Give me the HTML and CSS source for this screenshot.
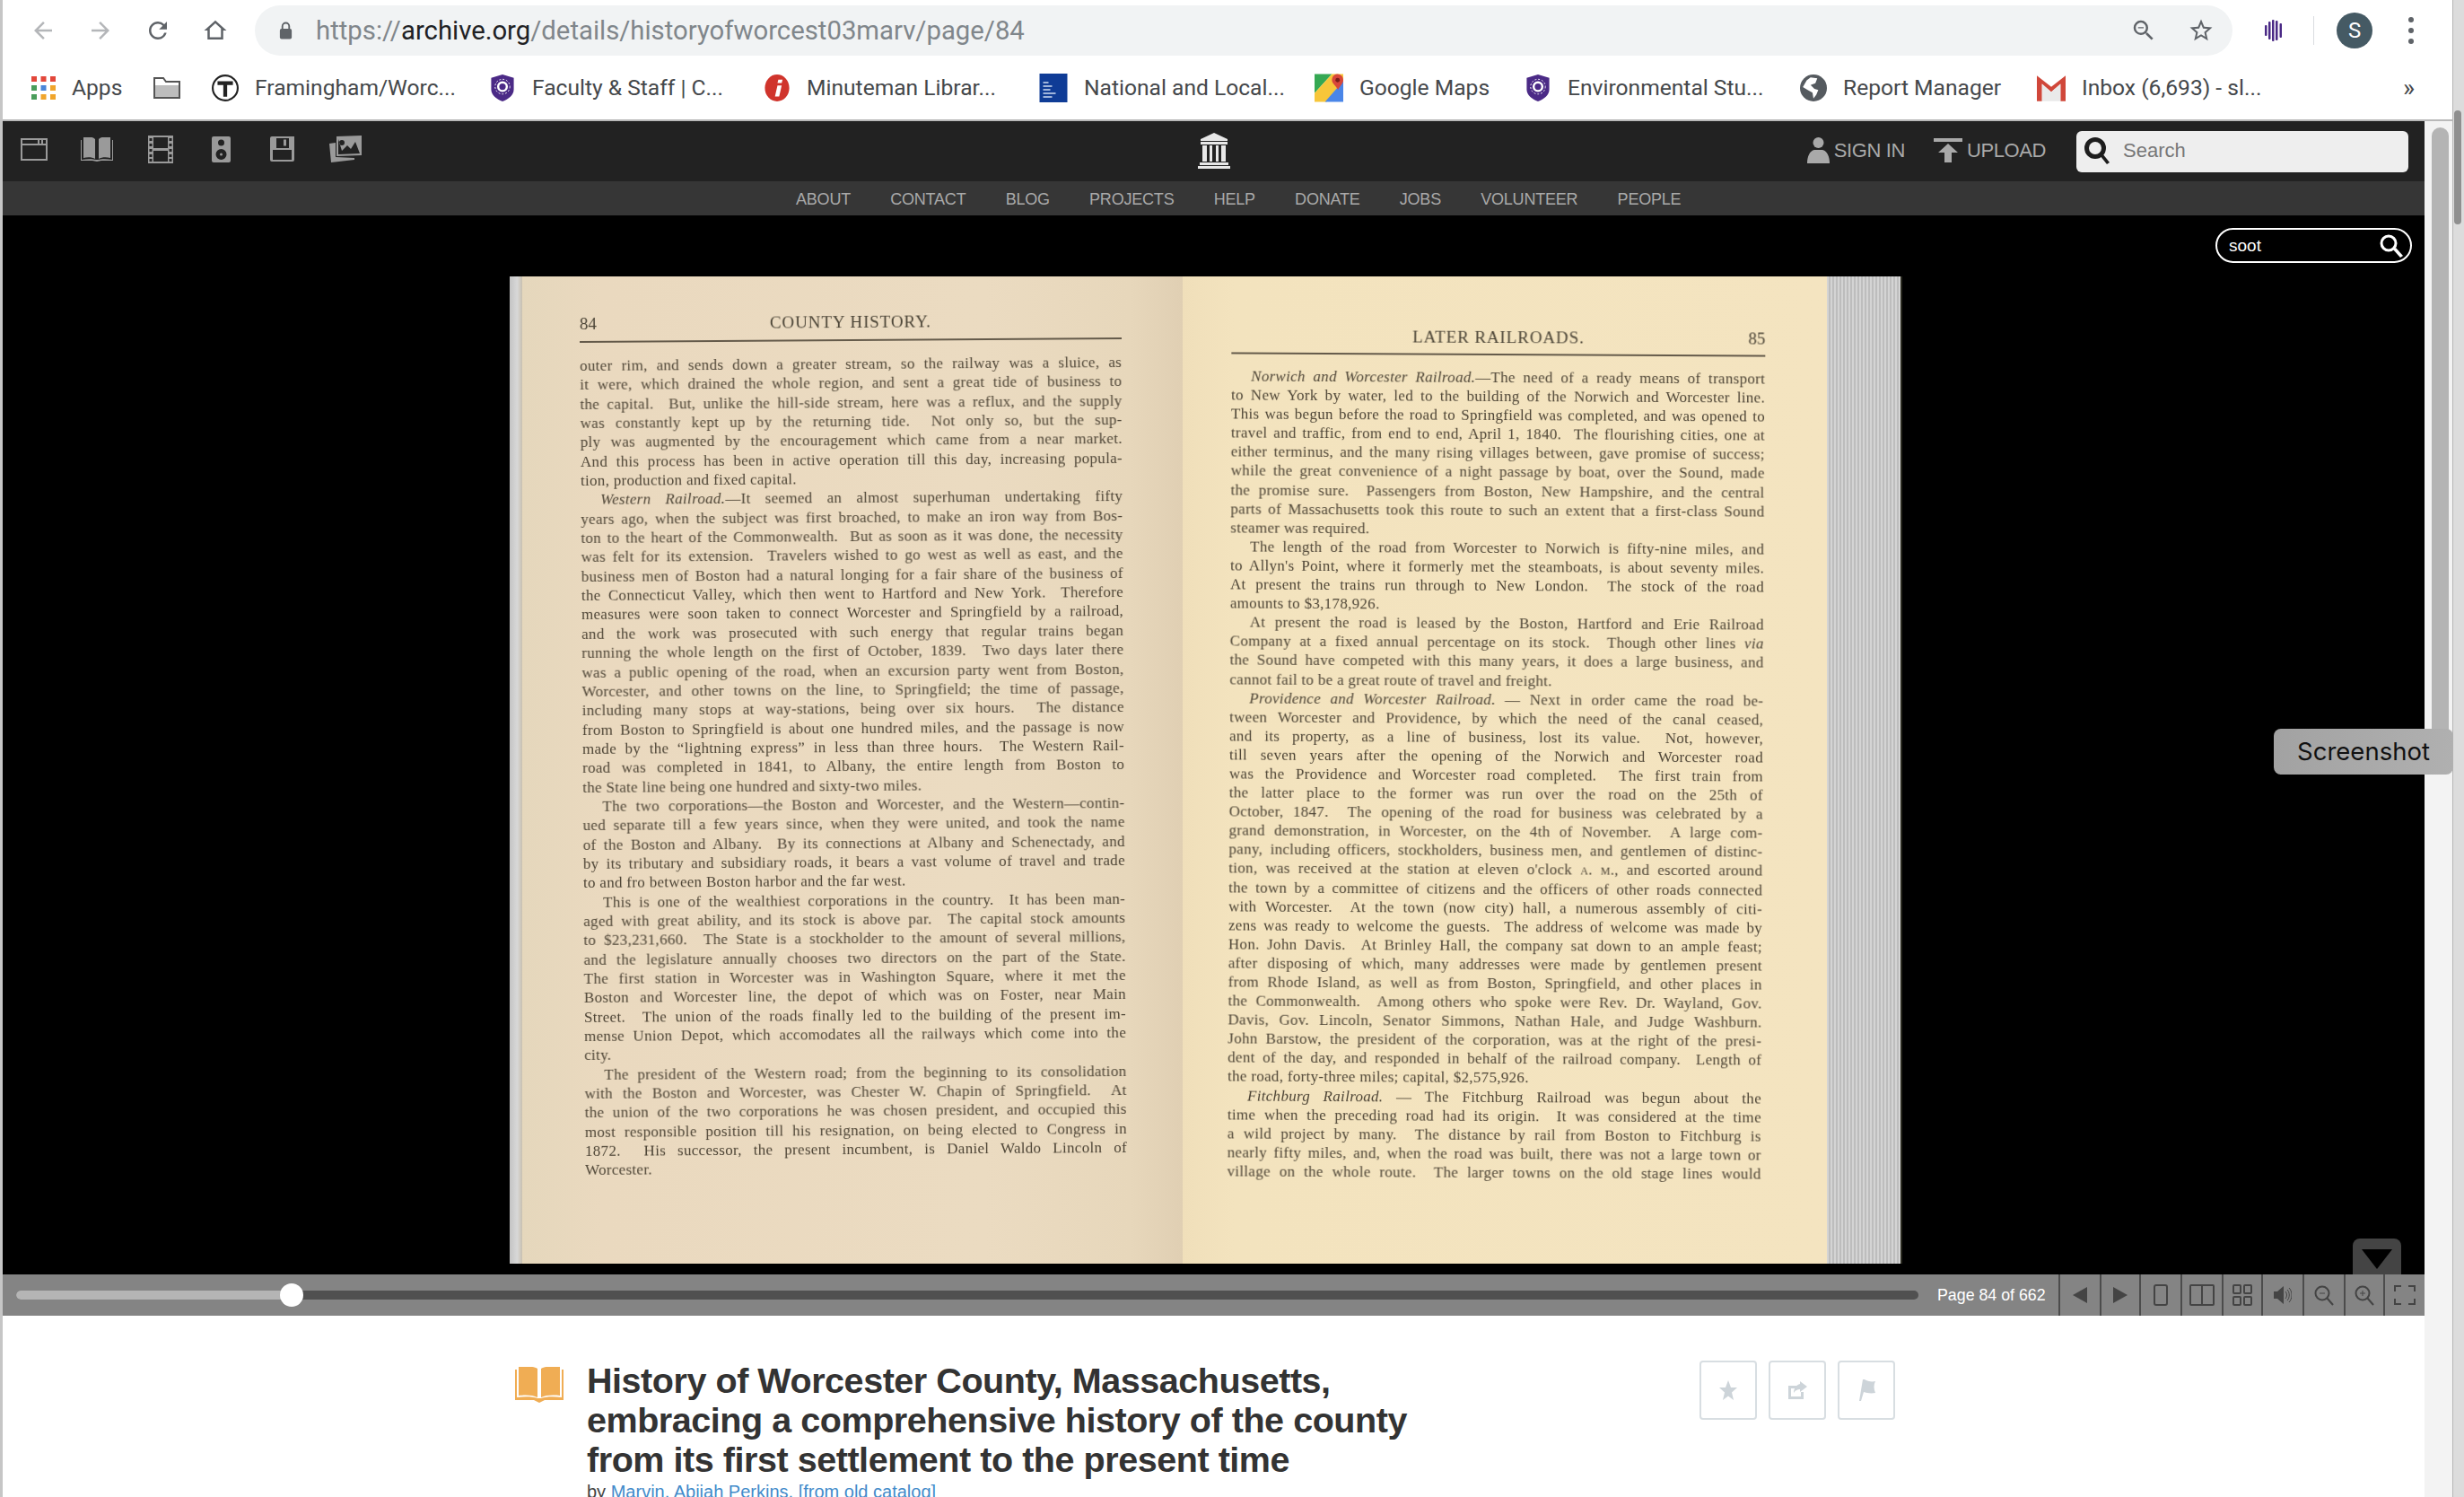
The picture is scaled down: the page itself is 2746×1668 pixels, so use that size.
FILE: index.html
```html
<!DOCTYPE html>
<html lang="en">
<head>
<meta charset="utf-8">
<title>History of Worcester County, Massachusetts</title>
<link rel="stylesheet" href="styles.css">
</head>
<body>
<div class="window">
  <div class="main">
    <header class="chrome">
      <div class="toolbar">
        <svg class="tb-icon faded" viewBox="0 0 24 24"><path d="M20 11H7.83l5.59-5.59L12 4l-8 8 8 8 1.41-1.41L7.83 13H20v-2z"/></svg>
        <svg class="tb-icon faded" viewBox="0 0 24 24"><path d="M12 4l-1.41 1.41L16.17 11H4v2h12.17l-5.58 5.59L12 20l8-8z"/></svg>
        <svg class="tb-icon" viewBox="0 0 24 24"><path d="M17.65 6.35A7.958 7.958 0 0 0 12 4c-4.42 0-7.99 3.58-7.99 8s3.57 8 7.99 8c3.73 0 6.84-2.55 7.73-6h-2.08A5.99 5.99 0 0 1 12 18c-3.31 0-6-2.69-6-6s2.69-6 6-6c1.66 0 3.14.69 4.22 1.78L13 11h7V4l-2.35 2.35z"/></svg>
        <svg class="tb-icon" viewBox="0 0 24 24"><path d="M12 3L2 12h3v8h14v-8h3L12 3zm5 15H7v-7.81l5-4.5 5 4.5V18z"/></svg>
        <div class="omnibox">
          <svg class="lock" viewBox="0 0 18 22"><path d="M4 9V6a5 5 0 0 1 10 0v3h-2V6a3 3 0 0 0-6 0v3z"/><rect x="2" y="9" width="14" height="12" rx="2"/></svg>
          <span class="url">https://<b>archive.org</b>/details/historyofworcest03marv/page/84</span>
          <svg class="tb-icon omni-action" viewBox="0 0 24 24"><path d="M15.5 14h-.79l-.28-.27A6.471 6.471 0 0 0 16 9.5 6.5 6.5 0 1 0 9.5 16c1.61 0 3.09-.59 4.23-1.57l.27.28v.79l5 4.99L20.49 19l-4.99-5zm-6 0C7.01 14 5 11.99 5 9.5S7.01 5 9.5 5 14 7.01 14 9.5 11.99 14 9.5 14zM7 9h5v1H7z"/></svg>
          <svg class="tb-icon omni-action" viewBox="0 0 24 24"><path d="M22 9.24l-7.19-.62L12 2 9.19 8.63 2 9.24l5.46 4.73L5.82 21 12 17.27 18.18 21l-1.63-7.03L22 9.24zM12 15.4l-3.76 2.27 1-4.28-3.32-2.88 4.38-.38L12 6.1l1.71 4.04 4.38.38-3.32 2.88 1 4.28L12 15.4z"/></svg>
        </div>
        <svg class="ext" viewBox="0 0 20 24"><g fill="#4b2a86"><rect x="0" y="6" width="2.5" height="12" rx="1"/><rect x="4" y="2" width="2.5" height="20" rx="1"/><rect x="8" y="0" width="2.5" height="24" rx="1"/><rect x="12" y="1" width="2.5" height="22" rx="1"/><rect x="16.500" y="4" width="2.500" height="16" rx="1"/></g></svg>
        <span class="tb-sep"></span>
        <span class="avatar">S</span>
        <span class="dots"><i></i><i></i><i></i></span>
      </div>
      <nav class="bookmarks">
        <a class="bm"><svg class="bm-icon apps" viewBox="0 0 27 26"><g fill="#e2473a"><rect width="6" height="6"/><rect x="10.500" width="6" height="6"/><rect x="21" width="6" height="6"/></g><rect y="10" width="6" height="6" fill="#4a9d5b"/><rect x="10.500" y="10" width="6" height="6" fill="#4a86d8"/><rect x="21" y="10" width="6" height="6" fill="#f0a52c"/><rect y="20" width="6" height="6" fill="#4a9d5b"/><rect x="10.500" y="20" width="6" height="6" fill="#f0a52c"/><rect x="21" y="20" width="6" height="6" fill="#f0a52c"/></svg>Apps</a>
        <a class="bm"><svg class="bm-icon folder" viewBox="0 0 30 24"><path d="M1 1h10l3 4h15v18H1z" fill="#fff" stroke="#555" stroke-width="2"/><rect x="2" y="9" width="26" height="13" fill="#bdbdbd"/></svg></a>
        <a class="bm"><svg class="bm-icon round" viewBox="0 0 28 28"><circle cx="14" cy="14" r="13" fill="#fff" stroke="#222" stroke-width="2"/><path d="M6 7h16v4h-6v12h-4V11H6z" fill="#222"/></svg><span class="bm-text">Framingham/Worc...</span></a>
        <a class="bm"><svg class="bm-icon shield" viewBox="0 0 28 31"><path d="M14 0l13 4v13c0 7-6 11-13 14C7 28 1 24 1 17V4z" fill="#4b2a86"/><circle cx="14" cy="14" r="5" fill="none" stroke="#fff" stroke-width="2.500"/><circle cx="14" cy="14" r="8.500" fill="none" stroke="#fff" stroke-width="1" stroke-dasharray="2 2"/></svg><span class="bm-text">Faculty &amp; Staff | C...</span></a>
        <a class="bm"><svg class="bm-icon round" viewBox="0 0 29 32"><ellipse cx="14.500" cy="16" rx="14.500" ry="16" fill="#d0342c"/><path d="M15 13h5l-3 13h-5zM16 6h5l-1 4h-5z" fill="#fff"/></svg><span class="bm-text">Minuteman Librar...</span></a>
        <a class="bm"><svg class="bm-icon square" viewBox="0 0 31 32"><rect width="31" height="32" fill="#0f3c96"/><path d="M4 10h6M4 14h10M4 18h8M4 22h14M4 26h10" stroke="#cfdcf2" stroke-width="1.500"/></svg><span class="bm-text">National and Local...</span></a>
        <a class="bm"><svg class="bm-icon square" viewBox="0 0 33 32"><path d="M0 0h20L0 22z" fill="#35a853"/><path d="M20 0h13v8L14 32H0V22z" fill="#f7c63a"/><path d="M12 32L33 8v24z" fill="#4a86e8"/><path d="M26 0c5 0 7 4 7 7 0 4-4 7-6 11-2-4-7-7-7-11 0-3 2-7 6-7z" fill="#d8473a"/><circle cx="26.500" cy="7" r="2.500" fill="#7a1f19"/></svg><span class="bm-text">Google Maps</span></a>
        <a class="bm"><svg class="bm-icon shield" viewBox="0 0 28 31"><path d="M14 0l13 4v13c0 7-6 11-13 14C7 28 1 24 1 17V4z" fill="#4b2a86"/><circle cx="14" cy="14" r="5" fill="none" stroke="#fff" stroke-width="2.500"/><circle cx="14" cy="14" r="8.500" fill="none" stroke="#fff" stroke-width="1" stroke-dasharray="2 2"/></svg><span class="bm-text">Environmental Stu...</span></a>
        <a class="bm"><svg class="bm-icon round" viewBox="0 0 28 28"><circle cx="14" cy="14" r="14" fill="#555a5f"/><path d="M11 3l7 1-2 5-5 2 4 4 4 1-2 5-3 4-1-6-5-3-5-3 4-7z" fill="#fff"/></svg><span class="bm-text">Report Manager</span></a>
        <a class="bm"><svg class="bm-icon square" viewBox="0 0 28 26"><path d="M0 1v25h5V9l9 8 9-8v17h5V1l-14 11z" fill="#d0473a"/><path d="M5 9l9 8 9-8v17H5z" fill="#eaeaea"/></svg><span class="bm-text">Inbox (6,693) - sl...</span></a>
        <span class="bm-more">»</span>
      </nav>
    </header>
    <div class="content">
      <div class="page">
        <div class="sitebar">
          <div class="media">
            <svg class="m-web" viewBox="0 0 30 25"><path d="M0 0h30v25H0zM2 8v15h26V8zM2 2v4h17V2zM21 2v4h2V2zM25 2v4h3V2z" fill-rule="evenodd"/></svg>
            <svg class="m-book" viewBox="0 0 36 27"><path d="M3 0c4-1 10-1 13 2v22c-3-2-9-2-13-1zM33 0c-4-1-10-1-13 2v22c3-2 9-2 13-1z"/><path d="M0 3h1v22c6-1 12-1 16 0h2c4-1 10-1 16 0V3h1v23H23l-5 1-5-1H0z"/></svg>
            <svg class="m-film" viewBox="0 0 28 31"><path fill-rule="evenodd" d="M0 0h28v31H0zM6 2v12h16V2zM6 17v12h16V17zM1.500 3v3h3V3zM1.500 9v3h3V9zM1.500 15v3h3v-3zM1.500 21v3h3v-3zM1.500 26v3h3v-3zM23.500 3v3h3V3zM23.500 9v3h3V9zM23.500 15v3h3v-3zM23.500 21v3h3v-3zM23.500 26v3h3v-3z"/></svg>
            <svg class="m-audio" viewBox="0 0 21 29"><path fill-rule="evenodd" d="M2 0h17a2 2 0 0 1 2 2v25a2 2 0 0 1-2 2H2a2 2 0 0 1-2-2V2a2 2 0 0 1 2-2zM10.500 3.500a3.500 3.500 0 1 0 0 7 3.500 3.500 0 0 0 0-7zM10.500 14a6 6 0 1 0 0 12 6 6 0 0 0 0-12zM10.500 18.500a1.500 1.500 0 1 1 0 3 1.500 1.500 0 0 1 0-3z"/></svg>
            <svg class="m-soft" viewBox="0 0 27 28"><path fill-rule="evenodd" d="M2 0h25v26a2 2 0 0 1-2 2H2a2 2 0 0 1-2-2V2a2 2 0 0 1 2-2zM7 2v11h14V2zM3 15v11h21V15zM15 3.500h3v7h-3z"/></svg>
            <svg class="m-image" viewBox="0 0 36 30"><path d="M0 9l7-1v16l21 1v2L2 30z"/><path fill-rule="evenodd" d="M8 1l28-1v22l-28 1zM10 4v17l24-1-5-13-5 8-4-4-6 6zM14 5a3 3 0 1 0 0 6 3 3 0 0 0 0-6z"/></svg>
          </div>
          <svg class="temple" viewBox="0 0 36 40"><path d="M18 0l15 7v2H3V7zM3 10h30v3H3zM5 14h5v18H5zM13 14h3v18h-3zM20 14h3v18h-3zM26 14h5v18h-5zM2 33h32v3H2zM0 37h36v3H0z"/></svg>
          <div class="account">
            <span class="acct-link"><svg class="ic-person" viewBox="0 0 25 29"><circle cx="12.500" cy="6" r="6"/><path d="M5 29H0c0-8 3-14 8-15h9c5 1 8 7 8 15z"/></svg>SIGN IN</span>
            <span class="acct-link upload"><svg class="ic-upload" viewBox="0 0 32 27"><path d="M0 0h32v4H0zM16 6l11 10h-7v11h-8V16H5z"/></svg>UPLOAD</span>
            <div class="site-search">
              <svg class="ic-find" viewBox="0 0 28 30"><circle cx="12" cy="12" r="9.500" fill="none" stroke="#1d1d1d" stroke-width="5"/><path d="M17 20l3-2 8 10-3 2z" fill="#1d1d1d"/></svg>
              <span>Search</span>
            </div>
          </div>
        </div>
        <nav class="sitenav"><a>ABOUT</a><a>CONTACT</a><a>BLOG</a><a>PROJECTS</a><a>HELP</a><a>DONATE</a><a>JOBS</a><a>VOLUNTEER</a><a>PEOPLE</a></nav>
        <section class="viewer">
          <div class="inside-search"><span>soot</span><svg class="ic-inside" viewBox="0 0 26 26"><circle cx="10" cy="10" r="8" fill="none" stroke="#fff" stroke-width="3"/><path d="M15 17l3-2 8 9-3 2z" fill="#fff"/></svg></div>
          <div class="spread">
            <div class="edge edge-l"></div>
            <article class="leaf leaf-l">
              <div class="col col-l">
                <div class="runhead"><span>84</span><span class="runtitle">COUNTY HISTORY.</span><span></span></div>
                <p class="para"><span class="ln">outer rim, and sends down a greater stream, so the railway was a sluice, as</span><span class="ln">it were, which drained the whole region, and sent a great tide of business to</span><span class="ln">the capital. &nbsp;But, unlike the hill-side stream, here was a reflux, and the supply</span><span class="ln">was constantly kept up by the returning tide. &nbsp;Not only so, but the sup-</span><span class="ln">ply was augmented by the encouragement which came from a near market.</span><span class="ln">And this process has been in active operation till this day, increasing popula-</span><span class="ln end">tion, production and fixed capital.</span></p>
                <p class="para"><span class="ln first"><em>Western Railroad.</em>—It seemed an almost superhuman undertaking fifty</span><span class="ln">years ago, when the subject was first broached, to make an iron way from Bos-</span><span class="ln">ton to the heart of the Commonwealth. &nbsp;But as soon as it was done, the necessity</span><span class="ln">was felt for its extension. &nbsp;Travelers wished to go west as well as east, and the</span><span class="ln">business men of Boston had a natural longing for a fair share of the business of</span><span class="ln">the Connecticut Valley, which then went to Hartford and New York. &nbsp;Therefore</span><span class="ln">measures were soon taken to connect Worcester and Springfield by a railroad,</span><span class="ln">and the work was prosecuted with such energy that regular trains began</span><span class="ln">running the whole length on the first of October, 1839. &nbsp;Two days later there</span><span class="ln">was a public opening of the road, when an excursion party went from Boston,</span><span class="ln">Worcester, and other towns on the line, to Springfield; the time of passage,</span><span class="ln">including many stops at way-stations, being over six hours. &nbsp;The distance</span><span class="ln">from Boston to Springfield is about one hundred miles, and the passage is now</span><span class="ln">made by the “lightning express” in less than three hours. &nbsp;The Western Rail-</span><span class="ln">road was completed in 1841, to Albany, the entire length from Boston to</span><span class="ln end">the State line being one hundred and sixty-two miles.</span></p>
                <p class="para"><span class="ln first">The two corporations—the Boston and Worcester, and the Western—contin-</span><span class="ln">ued separate till a few years since, when they were united, and took the name</span><span class="ln">of the Boston and Albany. &nbsp;By its connections at Albany and Schenectady, and</span><span class="ln">by its tributary and subsidiary roads, it bears a vast volume of travel and trade</span><span class="ln end">to and fro between Boston harbor and the far west.</span></p>
                <p class="para"><span class="ln first">This is one of the wealthiest corporations in the country. &nbsp;It has been man-</span><span class="ln">aged with great ability, and its stock is above par. &nbsp;The capital stock amounts</span><span class="ln">to $23,231,660. &nbsp;The State is a stockholder to the amount of several millions,</span><span class="ln">and the legislature annually chooses two directors on the part of the State.</span><span class="ln">The first station in Worcester was in Washington Square, where it met the</span><span class="ln">Boston and Worcester line, the depot of which was on Foster, near Main</span><span class="ln">Street. &nbsp;The union of the roads finally led to the building of the present im-</span><span class="ln">mense Union Depot, which accomodates all the railways which come into the</span><span class="ln end">city.</span></p>
                <p class="para"><span class="ln first">The president of the Western road; from the beginning to its consolidation</span><span class="ln">with the Boston and Worcester, was Chester W. Chapin of Springfield. &nbsp;At</span><span class="ln">the union of the two corporations he was chosen president, and occupied this</span><span class="ln">most responsible position till his resignation, on being elected to Congress in</span><span class="ln">1872. &nbsp;His successor, the present incumbent, is Daniel Waldo Lincoln of</span><span class="ln end">Worcester.</span></p>
              </div>
            </article>
            <article class="leaf leaf-r">
              <div class="col col-r">
                <div class="runhead"><span></span><span class="runtitle">LATER RAILROADS.</span><span class="folio">85</span></div>
                <p class="para"><span class="ln first"><em>Norwich and Worcester Railroad.</em>—The need of a ready means of transport</span><span class="ln">to New York by water, led to the building of the Norwich and Worcester line.</span><span class="ln">This was begun before the road to Springfield was completed, and was opened to</span><span class="ln">travel and traffic, from end to end, April 1, 1840. &nbsp;The flourishing cities, one at</span><span class="ln">either terminus, and the many rising villages between, gave promise of success;</span><span class="ln">while the great convenience of a night passage by boat, over the Sound, made</span><span class="ln">the promise sure. &nbsp;Passengers from Boston, New Hampshire, and the central</span><span class="ln">parts of Massachusetts took this route to such an extent that a first-class Sound</span><span class="ln end">steamer was required.</span></p>
                <p class="para"><span class="ln first">The length of the road from Worcester to Norwich is fifty-nine miles, and</span><span class="ln">to Allyn's Point, where it formerly met the steamboats, is about seventy miles.</span><span class="ln">At present the trains run through to New London. &nbsp;The stock of the road</span><span class="ln end">amounts to $3,178,926.</span></p>
                <p class="para"><span class="ln first">At present the road is leased by the Boston, Hartford and Erie Railroad</span><span class="ln">Company at a fixed annual percentage on its stock. &nbsp;Though other lines <em>via</em></span><span class="ln">the Sound have competed with this many years, it does a large business, and</span><span class="ln end">cannot fail to be a great route of travel and freight.</span></p>
                <p class="para"><span class="ln first"><em>Providence and Worcester Railroad.</em> — Next in order came the road be-</span><span class="ln">tween Worcester and Providence, by which the need of the canal ceased,</span><span class="ln">and its property, as a line of business, lost its value. &nbsp;Not, however,</span><span class="ln">till seven years after the opening of the Norwich and Worcester road</span><span class="ln">was the Providence and Worcester road completed. &nbsp;The first train from</span><span class="ln">the latter place to the former was run over the road on the 25th of</span><span class="ln">October, 1847. &nbsp;The opening of the road for business was celebrated by a</span><span class="ln">grand demonstration, in Worcester, on the 4th of November. &nbsp;A large com-</span><span class="ln">pany, including officers, stockholders, business men, and gentlemen of distinc-</span><span class="ln">tion, was received at the station at eleven o'clock <span class="sc">a. m.</span>, and escorted around</span><span class="ln">the town by a committee of citizens and the officers of other roads connected</span><span class="ln">with Worcester. &nbsp;At the town (now city) hall, a numerous assembly of citi-</span><span class="ln">zens was ready to welcome the guests. &nbsp;The address of welcome was made by</span><span class="ln">Hon. John Davis. &nbsp;At Brinley Hall, the company sat down to an ample feast;</span><span class="ln">after disposing of which, many addresses were made by gentlemen present</span><span class="ln">from Rhode Island, as well as from Boston, Springfield, and other places in</span><span class="ln">the Commonwealth. &nbsp;Among others who spoke were Rev. Dr. Wayland, Gov.</span><span class="ln">Davis, Gov. Lincoln, Senator Simmons, Nathan Hale, and Judge Washburn.</span><span class="ln">John Barstow, the president of the corporation, was at the right of the presi-</span><span class="ln">dent of the day, and responded in behalf of the railroad company. &nbsp;Length of</span><span class="ln end">the road, forty-three miles; capital, $2,575,926.</span></p>
                <p class="para"><span class="ln first"><em>Fitchburg Railroad.</em> — The Fitchburg Railroad was begun about the</span><span class="ln">time when the preceding road had its origin. &nbsp;It was considered at the time</span><span class="ln">a wild project by many. &nbsp;The distance by rail from Boston to Fitchburg is</span><span class="ln">nearly fifty miles, and, when the road was built, there was not a large town or</span><span class="ln">village on the whole route. &nbsp;The larger towns on the old stage lines would</span></p>
              </div>
            </article>
            <div class="edge edge-r"></div>
          </div>
          <div class="hide-tab"><svg class="tab-tri" viewBox="0 0 34 22"><path d="M0 0h34L17 22z"/></svg></div>
        </section>
        <div class="controls">
          <div class="scrub"><span class="scrub-done"></span><span class="scrub-knob"></span></div>
          <span class="pagenum">Page 84 of 662</span>
          <div class="ctl-buttons">
            <span class="ctl"><svg class="c-tri" viewBox="0 0 16 18"><path d="M16 0v18L0 9z"/></svg></span>
            <span class="ctl"><svg class="c-tri" viewBox="0 0 16 18"><path d="M0 0v18l16-9z"/></svg></span>
            <span class="ctl"><svg class="c-one" viewBox="0 0 16 24"><rect x="1" y="1" width="14" height="22" rx="2" class="c-line"/></svg></span>
            <span class="ctl"><svg class="c-two" viewBox="0 0 28 24"><rect x="1" y="1" width="26" height="22" rx="1" class="c-line"/><path d="M14 1v22" class="c-line"/></svg></span>
            <span class="ctl"><svg class="c-grid" viewBox="0 0 22 24"><rect x="1" y="1" width="8" height="9" rx="1" class="c-line"/><rect x="13" y="1" width="8" height="9" rx="1" class="c-line"/><rect x="1" y="14" width="8" height="9" rx="1" class="c-line"/><rect x="13" y="14" width="8" height="9" rx="1" class="c-line"/></svg></span>
            <span class="ctl"><svg class="c-sound" viewBox="0 0 20 22"><path d="M0 7h4l7-6v20l-7-6H0z"/><path d="M13 7c2 2 2 6 0 8M15 5c3 3 3 9 0 12M17 3c4 4 4 12 0 16" class="c-thin"/></svg></span>
            <span class="ctl"><svg class="c-zoom" viewBox="0 0 22 23"><circle cx="9" cy="9" r="7.500" class="c-line"/><path d="M14 14l7 8" class="c-line"/><path d="M6 9h6" class="c-thin"/></svg></span>
            <span class="ctl"><svg class="c-zoom" viewBox="0 0 22 23"><circle cx="9" cy="9" r="7.500" class="c-line"/><path d="M14 14l7 8" class="c-line"/><path d="M6 9h6M9 6v6" class="c-thin"/></svg></span>
            <span class="ctl"><svg class="c-full" viewBox="0 0 24 22"><path d="M1 7V1h7M16 1h7v6M23 15v6h-7M8 21H1v-6" class="c-line"/></svg></span>
          </div>
        </div>
        <section class="details">
          <svg class="details-book" viewBox="0 0 54 40"><path d="M4 0c6-1 16-1 21 2v32c-5-3-15-3-21-2zM50 0c-6-1-16-1-21 2v32c5-3 15-3 21-2z"/><path d="M0 3h2v31c8-1 18-1 23 1h4c5-2 15-2 23-1V3h2v34H33l-6 3-6-3H0z"/></svg>
          <div class="details-main">
            <h1 class="title">History of Worcester County, Massachusetts, embracing a comprehensive history of the county from its first settlement to the present time</h1>
            <p class="byline">by <a>Marvin, Abijah Perkins, [from old catalog]</a></p>
          </div>
          <div class="actions">
            <span class="action"><svg class="a-ic" viewBox="0 0 24 24"><path d="M12 1l3 8h7l-6 5.500 2 8.500-6-4.500L6 23l2-8.500L2 9h7z"/></svg></span>
            <span class="action"><svg class="a-ic" viewBox="0 0 24 24"><path d="M2 7h11v3H5v9h11v-5h3v8H2z"/><path d="M15 2l8 6-8 6v-3c-3 0-5 1-7 4 0-5 3-9 7-10z"/></svg></span>
            <span class="action"><svg class="a-ic" viewBox="0 0 24 24"><path d="M8 0h2c3 2 8 3 12 2-2 4-2 8 0 13-5 1-10 0-13-1L6 24H4z"/></svg></span>
          </div>
        </section>
      </div>
      <div class="scroll-inner"><span class="scroll-thumb"></span></div>
    </div>
  </div>
  <div class="scroll-outer"><span class="outer-thumb"></span></div>
  <div class="tooltip">Screenshot</div>
</div>
</body>
</html>
```

FILE: styles.css
```css
html, body { margin: 0; height: 1668px; overflow: hidden; background: #fff; }
body { font-family: "Liberation Sans", Arial, sans-serif; }
svg { display: block; flex: none; }
p, h1 { margin: 0; }

.window { position: relative; display: flex; width: 2746px; height: 1668px; overflow: hidden; }
.main { width: 2733px; display: flex; flex-direction: column; border-left: 3px solid #c6c6c6; box-sizing: border-box; }

/* Browser chrome */
.chrome { height: 135px; flex: none; background: #fff; border-bottom: 2px solid #b9b9b9; box-sizing: border-box; }
.toolbar { height: 68px; display: flex; align-items: center; }
.tb-icon { width: 30px; height: 30px; fill: #5f6368; margin-right: 34px; }
.tb-icon:first-child { margin-left: 30px; }
.tb-icon.faded { fill: #b4b6b9; }
.omnibox { width: 2204px; height: 56px; margin-left: -5px; background: #f1f3f4; border-radius: 28px; display: flex; align-items: center; padding-left: 26px; box-sizing: border-box; }
.lock { width: 17px; height: 22px; fill: #5f6368; margin-right: 25px; }
.url { flex: 1; font: 29.300px/56px "Roboto", sans-serif; color: #80868b; }
.url b { font-weight: 400; color: #202124; }
.omni-action { margin-right: 0; margin-left: 34px; }
.omni-action:last-child { margin-right: 20px; }
.ext { width: 20px; height: 24px; margin-left: 36px; }
.tb-sep { width: 1px; height: 32px; background: #dadce0; margin-left: 34px; }
.avatar { width: 40px; height: 40px; margin-left: 25px; border-radius: 50%; background: #455a64; color: #fff; font: 24px/40px "Roboto", sans-serif; text-align: center; }
.dots { display: flex; flex-direction: column; gap: 6px; margin-left: 40px; }
.dots i { width: 6px; height: 6px; border-radius: 50%; background: #5f6368; }

.bookmarks { height: 65px; display: grid; grid-template-columns: 136px 65px 309px 306px 307px 307px 234px 307px 264px 408px auto; padding: 0 0 5px 32px; box-sizing: border-box; align-items: center; }
.bm { display: flex; align-items: center; gap: 18px; font: 24.600px/32px "Roboto", sans-serif; color: #45484b; white-space: nowrap; }
.bm-text { display: block; }
.bm-icon { height: 30px; width: 30px; }
.bm-icon.apps { width: 27px; height: 26px; }
.bm-icon.folder { height: 24px; }
.bm-icon.square { height: 32px; width: 32px; }
.bm-more { font: 28px/32px "Roboto", sans-serif; color: #45484b; }

/* Archive header */
.content { flex: 1; min-height: 0; display: flex; }
.page { width: 2699px; flex: none; display: flex; flex-direction: column; background: #fff; }
.sitebar { height: 67px; flex: none; background: #222; display: grid; grid-template-columns: 1fr auto 1fr; align-items: center; }
.media { display: grid; grid-template-columns: 67px 75px 71px 65px 66px auto; padding: 0 0 5px 20px; align-items: center; fill: #9a9a9a; }
.m-web { width: 30px; height: 25px; }
.m-book { width: 36px; height: 27px; }
.m-film { width: 28px; height: 31px; }
.m-audio { width: 21px; height: 29px; }
.m-soft { width: 27px; height: 28px; }
.m-image { width: 36px; height: 30px; }
.temple { width: 36px; height: 40px; fill: #e8e8e8; margin-bottom: 2px; }
.account { display: flex; justify-content: flex-end; align-items: center; padding-right: 18px; }
.acct-link { display: flex; align-items: center; gap: 5px; color: #a9a9a9; font-size: 22px; letter-spacing: -0.400px; padding-bottom: 2px; }
.acct-link.upload { margin-left: 32px; gap: 5px; }
.ic-person { width: 25px; height: 29px; fill: #a9a9a9; }
.ic-upload { width: 32px; height: 27px; fill: #a9a9a9; }
.site-search { width: 370px; height: 46px; margin-left: 34px; background: #eee; border-radius: 6px; display: flex; align-items: center; padding: 0 0 2px 9px; box-sizing: border-box; gap: 15px; color: #777; font-size: 22px; }
.ic-find { width: 28px; height: 30px; }
.sitenav { height: 38px; flex: none; background: #363636; display: flex; align-items: center; gap: 44.200px; padding: 3px 0 0 884px; box-sizing: border-box; font-size: 18px; color: #a9a9a9; letter-spacing: -0.200px; }

/* Book reader */
.viewer { position: relative; height: 1180px; flex: none; background: #000; padding: 68px 0 0 565px; box-sizing: border-box; }
.spread { display: flex; height: 1100px; width: 1552px; }
.edge { background: repeating-linear-gradient(90deg, #d4d4d4 0 2px, #bdbdbd 2px 4px); }
.edge-l { width: 14px; background: linear-gradient(90deg, #c4c4c4, #d8d8d8 60%, #c8c0b0); }
.edge-r { width: 84px; border-right: 2px solid #2a2a20; box-sizing: border-box; }
.leaf { overflow: hidden; }
.leaf-l { width: 736px; padding: 39px 0 0 67px; box-sizing: border-box; background: linear-gradient(90deg, #e5d7bc 0, #ead9bf 12%, #ebdbc1 70%, #e7d7bb 92%, #e0cfb3 100%); }
.leaf-r { width: 718px; padding: 56px 0 0 52px; box-sizing: border-box; background: linear-gradient(90deg, #f0dfba 0, #f3e3be 8%, #f4e4c0 100%); }
.col { color: #4e4536; font-family: "Liberation Serif", "Times New Roman", serif; font-size: 17px; letter-spacing: 0.3px; filter: blur(0.35px); }
.col-l { width: 604px; line-height: 21.350px; transform: rotate(-0.38deg); }
.col-r { width: 595px; line-height: 21.100px; transform: rotate(0.3deg); }
.runhead { display: grid; grid-template-columns: 1fr auto 1fr; align-items: center; height: 24px; line-height: 24px; padding-bottom: 7px; border-bottom: 2px solid #645a4a; margin-bottom: 15px; color: #4b4436; font-size: 19px; letter-spacing: 0; }
.col-r .runhead { padding-bottom: 6px; margin-bottom: 14px; }
.runtitle { letter-spacing: 0.900px; }
.folio { text-align: right; }
.para { display: block; }
.ln { display: block; white-space: nowrap; text-align: justify; text-align-last: justify; }
.ln.first { padding-left: 22px; }
.ln.end { text-align-last: left; }
.sc { font-variant: small-caps; }

.inside-search { position: absolute; left: 2466px; top: 14px; width: 219px; height: 39px; box-sizing: border-box; border: 2px solid #fff; border-radius: 20px; display: flex; align-items: center; justify-content: space-between; padding: 0 8px 0 13px; color: #fff; font-size: 19px; }
.ic-inside { width: 26px; height: 26px; }
.hide-tab { position: absolute; left: 2619px; bottom: 0; width: 54px; height: 40px; background: #444; border-radius: 8px 8px 0 0; display: flex; justify-content: center; padding-top: 12px; box-sizing: border-box; }
.tab-tri { width: 34px; height: 22px; fill: #000; }

.controls { height: 46px; flex: none; background: #848484; display: flex; align-items: center; }
.scrub { position: relative; width: 2120px; margin-left: 15px; height: 10px; border-radius: 5px; background: #505050; }
.scrub-done { position: absolute; left: 0; top: 0; bottom: 0; width: 300px; background: #b5b5b5; border-radius: 5px 0 0 5px; }
.scrub-knob { position: absolute; left: 294px; top: -8px; width: 26px; height: 26px; border-radius: 50%; background: #fff; }
.pagenum { margin-left: 21px; width: 135px; color: #fff; font-size: 17.800px; white-space: nowrap; }
.ctl-buttons { display: grid; grid-template-columns: 46px 44px 46px 46px 44px 46px 46px 44px 45px; height: 46px; }
.ctl { border-left: 2px solid #4c4c4c; display: flex; align-items: center; justify-content: center; fill: #444; }
.c-tri { width: 16px; height: 18px; }
.c-one { width: 16px; height: 24px; }
.c-two { width: 28px; height: 24px; }
.c-grid { width: 22px; height: 24px; }
.c-sound { width: 20px; height: 22px; }
.c-zoom { width: 22px; height: 23px; }
.c-full { width: 24px; height: 22px; }
.c-line { fill: none; stroke: #444; stroke-width: 2; }
.c-thin { fill: none; stroke: #444; stroke-width: 1; }

/* Item details */
.details { flex: 1; display: flex; padding: 50px 0 0 571px; position: relative; min-height: 0; }
.details-book { width: 54px; height: 40px; margin-top: 7px; fill: #f0ad54; }
.details-main { width: 1240px; margin-left: 26px; }
.title { max-width: 940px; font-size: 39.500px; line-height: 44px; font-weight: 700; letter-spacing: -0.450px; color: #333; }
.byline { font-size: 20px; line-height: 26px; color: #444; margin-top: 1px; }
.byline a { color: #428bca; }
.actions { display: flex; gap: 13px; }
.action { width: 64px; height: 66px; box-sizing: border-box; border: 2px solid #d8dee2; border-radius: 4px; display: flex; align-items: center; justify-content: center; }
.a-ic { width: 24px; height: 24px; fill: #cdd4d9; }

/* Scrollbars and tooltip */
.scroll-inner { flex: 1; background: #f3f3f3; position: relative; }
.scroll-thumb { position: absolute; left: 8px; top: 7px; width: 19px; height: 720px; border-radius: 10px; background: #b4b4b4; }
.scroll-outer { width: 13px; flex: none; background: #dcdcdc; border-left: 1px solid #b5b5b5; box-sizing: border-box; position: relative; }
.outer-thumb { position: absolute; left: 1px; top: 123px; width: 8px; height: 127px; background: #8f8f8f; border-radius: 4px; }
.tooltip { position: absolute; left: 2534px; top: 812px; width: 200px; height: 51px; border-radius: 8px; background: linear-gradient(90deg, #a2a2a2, #b0b0b0); color: #111; font: 27.500px/51px "Inter", sans-serif; text-align: center; }
```
